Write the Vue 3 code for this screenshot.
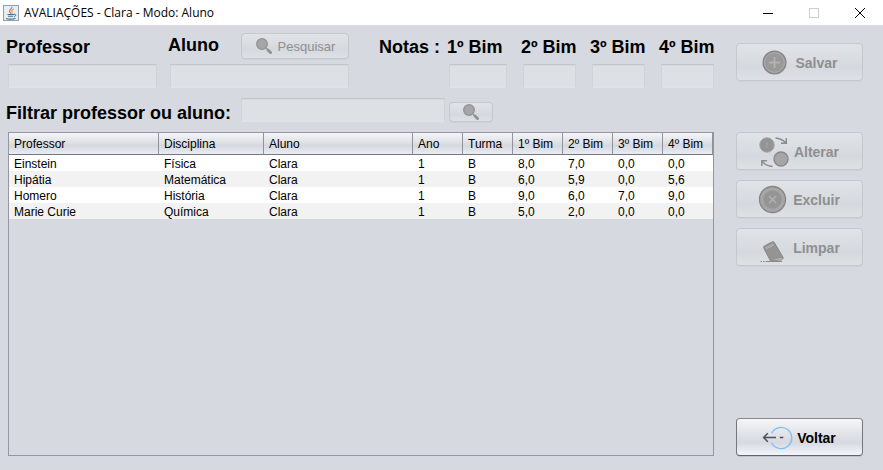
<script setup>
import { ref } from 'vue'

const columns = [
  { title: 'Professor', size: 150 },
  { title: 'Disciplina', size: 105 },
  { title: 'Aluno', size: 149 },
  { title: 'Ano', size: 50 },
  { title: 'Turma', size: 50 },
  { title: '1º Bim', size: 50 },
  { title: '2º Bim', size: 50 },
  { title: '3º Bim', size: 50 },
  { title: '4º Bim', size: 50 }
]
const total = columns.reduce((sum, c) => sum + c.size, 0)

const rows = [
  ['Einstein', 'Física', 'Clara', '1', 'B', '8,0', '7,0', '0,0', '0,0'],
  ['Hipátia', 'Matemática', 'Clara', '1', 'B', '6,0', '5,9', '0,0', '5,6'],
  ['Homero', 'História', 'Clara', '1', 'B', '9,0', '6,0', '7,0', '9,0'],
  ['Marie Curie', 'Química', 'Clara', '1', 'B', '5,0', '2,0', '0,0', '0,0']
]

const professor = ref('')
const aluno = ref('')
const filtro = ref('')
const notas = ref(['', '', '', ''])
</script>

<template>
  <div class="window">
    <header class="titlebar">
      <svg class="java" viewBox="0 0 16 16" aria-hidden="true">
        <rect x="0.5" y="0.5" width="15" height="15" fill="#e6edf3" stroke="#8ba0b4" />
        <path d="M8.8 1.8C9.6 4 5.6 4.8 6.6 6.8C7 7.7 8 8 7.9 8.8" fill="none" stroke="#e8743b" stroke-width="1.3" />
        <path d="M10.8 4C8.6 5 8.3 5.8 9 6.8C9.5 7.6 9 8.2 8.8 8.6" fill="none" stroke="#e8743b" />
        <path d="M4.5 9.5H11M5 11.3H10.2M3 13.4C5 14.4 10 14.4 12.5 13.2" fill="none" stroke="#44708f" stroke-width="1.1" />
        <path d="M11 9.3C13.4 8.8 13.4 11 11 11.6" fill="none" stroke="#44708f" />
      </svg>
      <h1>AVALIAÇÕES - Clara - Modo: Aluno</h1>
      <div class="controls">
        <button type="button" aria-label="Minimizar">
          <svg viewBox="0 0 12 12"><path d="M1 6.5H11" stroke="#000" /></svg>
        </button>
        <button type="button" aria-label="Maximizar" disabled>
          <svg viewBox="0 0 12 12"><rect x="1.5" y="1.5" width="9" height="9" fill="none" stroke="#ccc" /></svg>
        </button>
        <button type="button" aria-label="Fechar">
          <svg viewBox="0 0 12 12"><path d="M1 1L11 11M11 1L1 11" stroke="#000" /></svg>
        </button>
      </div>
    </header>

    <main class="content">
      <section class="left">
        <div class="split">
          <div class="people">
            <div class="field professor">
              <div class="head"><label for="professor">Professor</label></div>
              <input id="professor" v-model="professor" type="text" disabled />
            </div>
            <div class="field aluno">
              <div class="head">
                <label for="aluno" class="raised">Aluno</label>
                <button type="button" class="btn search" disabled>
                  <svg viewBox="0 0 18 18" aria-hidden="true">
                    <path d="M11 11L12.5 12.5" stroke="#9a9a9a" stroke-width="1.5" />
                    <path d="M13 13L15.5 15.5" stroke="#929292" stroke-width="3" stroke-linecap="round" />
                    <circle cx="7" cy="7" r="5.3" fill="#a6a6a6" stroke="#929292" stroke-width="1.3" />
                  </svg>
                  Pesquisar
                </button>
              </div>
              <input id="aluno" v-model="aluno" type="text" disabled />
            </div>
            <span class="notas-title">Notas :</span>
          </div>
          <div class="notas">
            <div v-for="n in 4" :key="n" class="field">
              <div class="head"><label :for="'nota' + n">{{ n }}º Bim</label></div>
              <input :id="'nota' + n" v-model="notas[n - 1]" type="text" disabled />
            </div>
          </div>
        </div>

        <div class="split filter">
          <div class="filter-field">
            <label for="filtro">Filtrar professor ou aluno:</label>
            <input id="filtro" v-model="filtro" type="text" disabled />
          </div>
          <button type="button" class="btn small" aria-label="Filtrar" disabled>
            <svg viewBox="0 0 18 18" aria-hidden="true">
              <path d="M11 11L12.5 12.5" stroke="#9a9a9a" stroke-width="1.5" />
              <path d="M13 13L15.5 15.5" stroke="#929292" stroke-width="3" stroke-linecap="round" />
              <circle cx="7" cy="7" r="5.3" fill="#a6a6a6" stroke="#929292" stroke-width="1.3" />
            </svg>
          </button>
        </div>

        <div class="pane">
          <table>
            <colgroup>
              <col v-for="c in columns" :key="c.title" :style="{ width: (c.size / total) * 100 + '%' }" />
            </colgroup>
            <thead>
              <tr><th v-for="c in columns" :key="c.title" scope="col">{{ c.title }}</th></tr>
            </thead>
            <tbody>
              <tr v-for="row in rows" :key="row[0]">
                <td v-for="(cell, i) in row" :key="i">{{ cell }}</td>
              </tr>
            </tbody>
          </table>
        </div>
      </section>

      <aside class="actions">
        <button type="button" class="btn action save" disabled>
          <svg viewBox="0 0 32 32" aria-hidden="true">
            <circle cx="15.5" cy="15.5" r="11.4" fill="#999" stroke="#858585" stroke-width="1.3" />
            <circle cx="15.5" cy="15.5" r="9.8" fill="none" stroke="#adadad" />
            <path d="M15.5 10V21M10 15.5H21" stroke="#b2b2b2" stroke-width="1.8" />
          </svg>
          Salvar
        </button>
        <button type="button" class="btn action" disabled>
          <svg viewBox="0 0 32 32" aria-hidden="true">
            <circle cx="9" cy="9" r="7.2" fill="#949494" stroke="#a2a2a2" />
            <path d="M9 6V12" stroke="#a8a8a8" />
            <circle cx="23" cy="23" r="7" fill="#a6a6a6" stroke="#8a8a8a" stroke-width="1.4" />
            <path d="M17.5 2C21.5 2.3 25 4 28 7M28.3 2V7.3H23M14.5 30.5C10.5 30.2 7 28.5 4 25.5M9 24.8H3.8V30" fill="none" stroke="#8c8c8c" stroke-width="1.4" />
          </svg>
          Alterar
        </button>
        <button type="button" class="btn action" disabled>
          <svg viewBox="0 0 32 32" aria-hidden="true">
            <circle cx="15.5" cy="15.5" r="13" fill="#a6a6a6" stroke="#858585" stroke-width="1.3" />
            <circle cx="15.5" cy="15.5" r="9.3" fill="#959595" />
            <path d="M12 12L19 19M19 12L12 19" stroke="#b2b2b2" stroke-width="1.4" />
          </svg>
          Excluir
        </button>
        <button type="button" class="btn action" disabled>
          <svg viewBox="0 0 32 32" aria-hidden="true">
            <path d="M7.4 14L15.6 9.7Q16.6 9.4 17.2 10.3L26.4 26L24.5 28L13.5 29L6.8 16Q6.3 14.7 7.4 14Z" fill="#949494" stroke="#858585" />
            <path d="M8 15.5L16 11.3L17.2 13.4L9.2 17.5Z" fill="#aaa" />
            <path d="M14.8 28L25.8 25.5L24.2 28.5Z" fill="#b2b2b2" />
            <path d="M3.5 29.5H5M6 29.5H7.5M8.5 29.5H25" stroke="#8b8b8b" />
          </svg>
          Limpar
        </button>
        <button type="button" class="btn action back">
          <svg viewBox="0 0 32 32" aria-hidden="true">
            <path d="M10.7 11.2A10.6 10.6 0 1 1 10.7 20.8" fill="none" stroke="#7ac0fa" stroke-width="1.4" />
            <path d="M2.5 15.5H15M6.8 11.3L2.6 15.5L6.8 19.7M18.8 15.5H22.3" fill="none" stroke="#4c5060" stroke-width="1.5" />
          </svg>
          Voltar
        </button>
      </aside>
    </main>
  </div>
</template>

<style>
body {
  margin: 0;
  background: #d6d9df;
}
</style>

<style scoped>
* {
  box-sizing: border-box;
}

.window {
  display: flex;
  flex-direction: column;
  min-height: 100vh;
  background: #d6d9df;
  color: #000;
  font-family: "Liberation Sans", Arial, sans-serif;
  font-size: 12px;
}

.titlebar {
  display: flex;
  align-items: center;
  height: 25px;
  padding-left: 3px;
  background: #fff;
}

.java {
  width: 16px;
  height: 16px;
}

h1 {
  flex: 1;
  margin: 0;
  padding-left: 5px;
  font: 400 12px/24px "Open Sans", "Noto Sans", sans-serif;
}

.controls {
  display: flex;
}

.controls button {
  display: grid;
  place-items: center;
  width: 46px;
  height: 24px;
  padding: 0;
  border: 0;
  background: none;
}

.controls svg {
  width: 12px;
  height: 12px;
}

.content {
  display: flex;
  flex: 1;
  gap: 22px;
  padding: 8px 20px 14px 8px;
}

.left {
  display: flex;
  flex: 1;
  flex-direction: column;
  gap: 10px;
  min-width: 0;
}

.split {
  display: grid;
  grid-template-columns: minmax(0, 441fr) minmax(0, 265fr);
}

.people {
  display: flex;
  gap: 13px;
}

.field {
  display: flex;
  flex-direction: column;
  gap: 5px;
  min-width: 0;
}

.professor {
  flex: 149;
}

.aluno {
  flex: 179;
}

.head {
  display: flex;
  justify-content: space-between;
  height: 26px;
}

label,
.notas-title {
  margin-left: -2px;
  font-size: 18px;
  font-weight: 700;
  line-height: 28px;
  white-space: nowrap;
}

.raised {
  line-height: 24px;
}

.notas-title {
  width: 70px;
  margin-left: 17px;
}

.notas {
  display: grid;
  grid-template-columns: 58fr 53fr 53fr 53fr;
  gap: 16px;
}

input {
  width: 100%;
  min-width: 0;
  height: 24px;
  padding: 0 6px;
  border: 1px solid #d0d3d8;
  border-top-color: #c4c6ca;
  border-bottom-color: #e0e2e6;
  background: #dde0e5;
  box-shadow: inset 0 1px #d6d8dc;
  font: inherit;
}

.filter {
  align-items: end;
}

.filter-field {
  display: flex;
  gap: 10px;
  padding-right: 4px;
}

.filter-field label {
  height: 24px;
  line-height: 30px;
}

.filter-field input {
  flex: 1;
}

.btn {
  display: flex;
  align-items: center;
  justify-content: center;
  border: 1px solid #c6c8cc;
  border-radius: 4px;
  background: linear-gradient(#e0e3e7, #d8dbe0 50%, #d5d8de 62%, #dde0e5);
  box-shadow: 0 1px #d0d3d8;
  color: #8e8f91;
  font-family: inherit;
}

.search {
  gap: 5px;
  width: 108px;
  padding: 0;
  font-size: 13px;
}

.search svg,
.small svg {
  width: 18px;
  height: 18px;
}

.small {
  width: 44px;
  height: 20px;
  padding: 0;
}

.pane {
  flex: 1;
  border: 1px solid #9297a1;
}

table {
  width: 100%;
  border-collapse: separate;
  border-spacing: 0;
  table-layout: fixed;
}

th,
td {
  overflow: hidden;
  font-weight: 400;
  text-align: left;
  white-space: nowrap;
}

th {
  height: 22px;
  padding: 0 5px;
  border-right: 1px solid #8f949c;
  border-bottom: 1px solid #73777f;
  background: linear-gradient(#f4f5f7, #dfe1e6 45%, #d5d8de 60%, #e9ecf2);
  line-height: 16px;
}

td {
  height: 16px;
  padding: 2px 5px 0;
  line-height: 14px;
}

tbody tr {
  background: #fff;
}

tbody tr:nth-child(even) {
  background: #f2f2f2;
}

.actions {
  display: flex;
  flex-direction: column;
  gap: 10px;
  width: 127px;
  padding-top: 10px;
}

.action {
  gap: 4px;
  height: 38px;
  padding: 2px 2px 0 0;
  font-size: 14px;
  font-weight: 700;
}

.action svg {
  width: 32px;
  height: 32px;
}

.save {
  margin-bottom: 41px;
}

.back {
  margin-top: auto;
  border-color: #85888d #74777c #5f6267;
  background: linear-gradient(#f5f6f8, #dddfe4 50%, #d6d9df 65%, #f2f5fb);
  box-shadow: 0 1px #c0c3c8;
  color: #000;
}
</style>
